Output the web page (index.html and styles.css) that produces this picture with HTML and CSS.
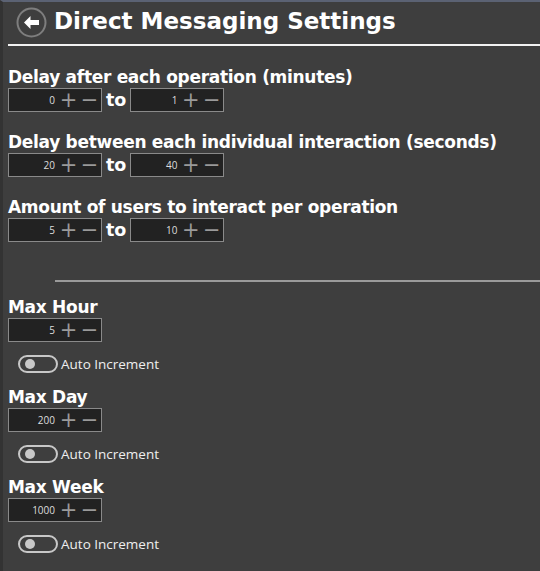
FILE: index.html
```html
<!DOCTYPE html>
<html lang="en">
<head>
    <meta charset="UTF-8">
    <meta name="viewport" content="width=device-width, initial-scale=1.0">
    <title>Direct Messaging Settings</title>
    <link rel="stylesheet" href="styles.css">
</head>
<body>
    <div class="page">
        <div class="header">
            <svg class="back" width="31" height="31" viewBox="0 0 31 31">
                <circle cx="15.5" cy="15.5" r="14" fill="none" stroke="#7e7e7e" stroke-width="2"/>
                <path d="M8 15.5 L14.5 9 L14.5 13 L23 13 L23 18 L14.5 18 L14.5 22 Z" fill="#fff"/>
            </svg>
            <h1>Direct Messaging Settings</h1>
        </div>
        <div class="rule"></div>

        <div class="group">
            <h2>Delay after each operation (minutes)</h2>
            <div class="range">
                <div class="spin"><span class="val">0</span><span class="btn">+</span><span class="btn">&minus;</span></div>
                <span class="to">to</span>
                <div class="spin"><span class="val">1</span><span class="btn">+</span><span class="btn">&minus;</span></div>
            </div>
        </div>

        <div class="group">
            <h2>Delay between each individual interaction (seconds)</h2>
            <div class="range">
                <div class="spin"><span class="val">20</span><span class="btn">+</span><span class="btn">&minus;</span></div>
                <span class="to">to</span>
                <div class="spin"><span class="val">40</span><span class="btn">+</span><span class="btn">&minus;</span></div>
            </div>
        </div>

        <div class="group">
            <h2>Amount of users to interact per operation</h2>
            <div class="range">
                <div class="spin"><span class="val">5</span><span class="btn">+</span><span class="btn">&minus;</span></div>
                <span class="to">to</span>
                <div class="spin"><span class="val">10</span><span class="btn">+</span><span class="btn">&minus;</span></div>
            </div>
        </div>

        <div class="divider"></div>

        <div class="limit">
            <h2>Max Hour</h2>
            <div class="spin"><span class="val">5</span><span class="btn">+</span><span class="btn">&minus;</span></div>
            <label class="toggle"><span class="switch"></span>Auto Increment</label>
        </div>

        <div class="limit">
            <h2>Max Day</h2>
            <div class="spin"><span class="val">200</span><span class="btn">+</span><span class="btn">&minus;</span></div>
            <label class="toggle"><span class="switch"></span>Auto Increment</label>
        </div>

        <div class="limit">
            <h2>Max Week</h2>
            <div class="spin"><span class="val">1000</span><span class="btn">+</span><span class="btn">&minus;</span></div>
            <label class="toggle"><span class="switch"></span>Auto Increment</label>
        </div>
    </div>
</body>
</html>
```

FILE: styles.css
```css
body {
    margin: 0;
    background-color: #3e3e3e;
    color: #fff;
    font-family: "DejaVu Sans", sans-serif;
}
.page {
    min-height: 569px;
    border-top: 2px solid #5b6273;
    border-left: 3px solid #333;
}
.header {
    display: flex;
    align-items: center;
    gap: 7px;
    padding-left: 13px;
    height: 38px;
}
.back {
    display: block;
    margin-top: 2px;
}
h1 {
    margin: 0;
    font-size: 23px;
    font-weight: bold;
    line-height: 28px;
}
.rule {
    margin: 4px 0 0 5px;
    border-top: 2px solid #f2f2f2;
}
.group {
    padding: 19px 0 0 5px;
}
.rule + .group {
    padding-top: 20px;
}
h2 {
    margin: 0;
    font-size: 17px;
    font-weight: bold;
    letter-spacing: -0.3px;
    line-height: 22px;
}
.range {
    display: flex;
    align-items: center;
    gap: 4px;
}
.to {
    font-size: 17.5px;
    font-weight: bold;
}
.spin {
    display: flex;
    align-items: center;
    justify-content: flex-end;
    width: 91px;
    height: 22px;
    padding-right: 1px;
    background: #222;
    border: 1px solid #8a8a8a;
}
.val {
    font-family: "Open Sans", sans-serif;
    font-size: 10px;
    color: #ddd;
    margin-right: 3px;
}
.btn {
    width: 21px;
    text-align: center;
    font-size: 21px;
    line-height: 20px;
    color: #9a9a9a;
}
.divider {
    margin: 38px 0 0 52px;
    border-top: 2px solid #9a9a9a;
}
.limit {
    padding: 14px 0 0 5px;
}
.limit + .limit {
    padding-top: 13px;
}
.toggle {
    display: flex;
    align-items: center;
    gap: 3px;
    margin: 13px 0 0 10px;
    font-family: "Open Sans", sans-serif;
    font-size: 13.5px;
    color: #eee;
}
.switch {
    position: relative;
    width: 36px;
    height: 14px;
    border: 2px solid #c8c8c8;
    border-radius: 9px;
}
.switch::after {
    content: "";
    position: absolute;
    left: 5px;
    top: 2px;
    width: 10px;
    height: 10px;
    border-radius: 50%;
    background: #c8c8c8;
}
```
